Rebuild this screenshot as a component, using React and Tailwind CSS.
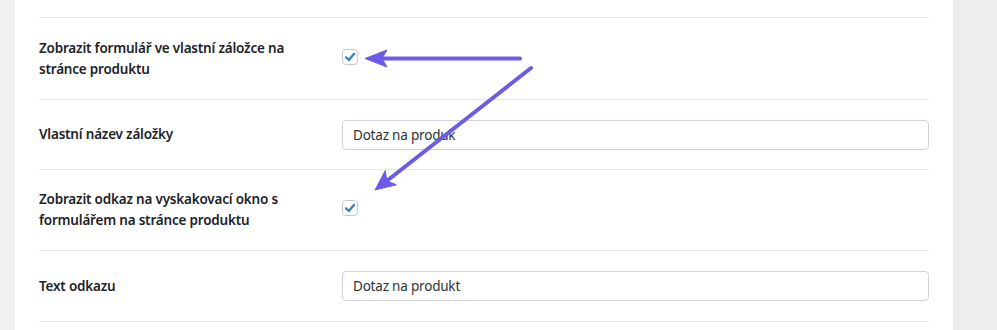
import React from "react";

const FONT = { fontFamily: '"Noto Sans", "Open Sans", Arial, sans-serif' };

function Checkbox() {
  return (
    <span className="mb-1 flex h-4 w-4 items-center justify-center rounded-[4px] border border-[#c7c8cc] bg-white">
      <svg width="12" height="12" viewBox="0 0 12 12">
        <path
          d="M2 6.3 L4.8 9 L10.2 2.8"
          fill="none"
          stroke="#2e7ec4"
          strokeWidth="2.2"
          strokeLinecap="round"
          strokeLinejoin="round"
        />
      </svg>
    </span>
  );
}

function TextInput({ value }) {
  return (
    <input
      type="text"
      defaultValue={value}
      className="h-[30px] w-full rounded-[4px] border border-[#d0d1da] bg-white px-[10px] text-[13.5px] tracking-[-0.2px] text-[#2c3338] outline-none"
      style={FONT}
    />
  );
}

function Row({ height, label, children }) {
  return (
    <div className={`flex items-center border-b border-[#e7e7e9] ${height}`}>
      <div className="w-[303px] shrink-0 text-[13.5px] font-semibold leading-[21px] tracking-[-0.2px] text-[#1d2327]">
        {label}
      </div>
      <div className="flex flex-1 items-center">{children}</div>
    </div>
  );
}

export default function App() {
  return (
    <div className="relative flex h-[330px] overflow-hidden bg-[#f0f0f1]" style={FONT}>
      <div className="w-[15px] shrink-0" />
      <div className="w-[938px] shrink-0 bg-white px-6 shadow-[1px_0_2px_rgba(0,0,0,0.05)]">
        <div className="h-[18px] border-b border-[#e7e7e9]" />
        <Row
          height="h-[82px]"
          label={
            <>
              Zobrazit formulář ve vlastní záložce na
              <br />
              stránce produktu
            </>
          }
        >
          <Checkbox />
        </Row>
        <Row height="h-[70px]" label="Vlastní název záložky">
          <TextInput value="Dotaz na produk" />
        </Row>
        <Row
          height="h-[81px]"
          label={
            <>
              Zobrazit odkaz na vyskakovací okno s
              <br />
              formulářem na stránce produktu
            </>
          }
        >
          <Checkbox />
        </Row>
        <Row height="h-[71px]" label="Text odkazu">
          <TextInput value="Dotaz na produkt" />
        </Row>
      </div>
      <div className="flex-1 bg-[#ededed]" />

      <svg
        className="pointer-events-none absolute left-0 top-0"
        width="997"
        height="330"
        viewBox="0 0 997 330"
      >
        <g fill="#6a5ce8" stroke="#6a5ce8">
          <line x1="520" y1="58.5" x2="383" y2="58.5" strokeWidth="4" strokeLinecap="round" />
          <polygon points="365,58.5 387,50 382,58.5 387,67" strokeWidth="1" strokeLinejoin="round" />
          <line x1="531" y1="68" x2="388" y2="180" strokeWidth="4" strokeLinecap="round" />
          <polygon points="375,190 385.3,170.6 386.8,180.8 396.3,184.8" strokeWidth="1" strokeLinejoin="round" />
        </g>
      </svg>
    </div>
  );
}
